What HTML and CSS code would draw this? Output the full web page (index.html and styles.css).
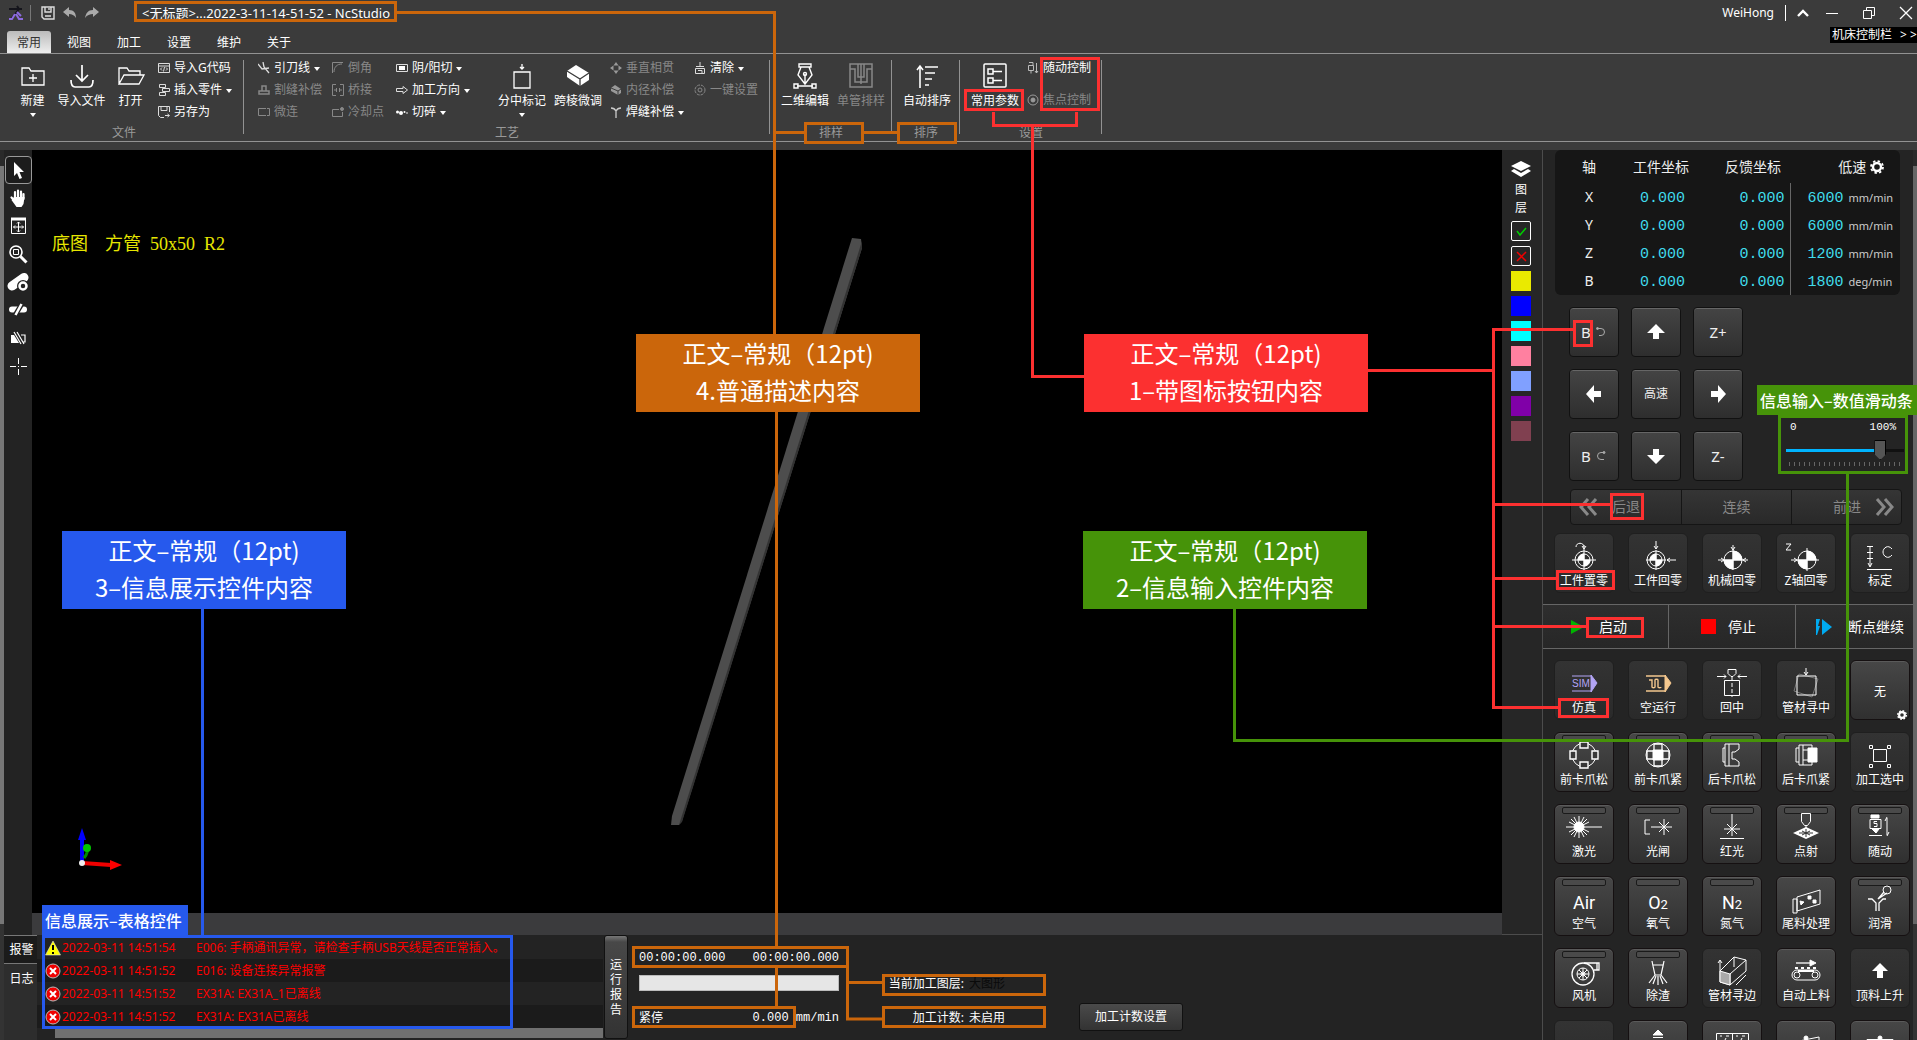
FILE: index.html
```html
<!DOCTYPE html>
<html lang="zh-CN">
<head>
<meta charset="utf-8">
<title>NcStudio</title>
<link rel="stylesheet" href="styles.css">
</head>
<body>
<div class="app">

<header class="titlebar">
  <svg class="logo" width="16" height="16" viewBox="0 0 16 16"><path d="M1 4h13M9 1l2 3-8 10" stroke="#15151c" stroke-width="2" fill="none"/><path d="M1 14h3l3-5M8 9l3 5h4M9 7l4 4" stroke="#8d6be0" stroke-width="2" fill="none"/></svg>
  <span class="bar"></span>
  <button class="plain" aria-label="保存"><svg width="16" height="16" viewBox="0 0 16 16" fill="none" stroke="#ddd" stroke-width="1.4"><path d="M2 2h12v12H4l-2-2zM5 2v5h6V2M5 11h6M9 3v2"/></svg></button>
  <button class="plain" aria-label="撤销"><svg width="16" height="16" viewBox="0 0 16 16"><path d="M1 7l6-5v3c5 0 7 3 7 8-2-3-4-4-7-4v3z" fill="#aaa"/></svg></button>
  <button class="plain" aria-label="重做"><svg width="16" height="16" viewBox="0 0 16 16"><path d="M15 7L9 2v3c-5 0-7 3-8 8 2-3 5-4 8-4v3z" fill="#aaa"/></svg></button>
  <h1>&lt;无标题&gt;...2022-3-11-14-51-52 - NcStudio</h1>
  <span class="user">WeiHong</span>
  <span class="bar light"></span>
  <button class="plain win" aria-label="收起"><svg width="14" height="14" viewBox="0 0 14 14"><path d="M2 10l5-5 5 5" stroke="#fff" stroke-width="2.4" fill="none"/></svg></button>
  <button class="plain win near" aria-label="最小化"><svg width="14" height="14" viewBox="0 0 14 14"><path d="M1 7.500h12" stroke="#fff"/></svg></button>
  <button class="plain win" aria-label="还原"><svg width="14" height="14" viewBox="0 0 14 14"><path d="M1.500 4.500h8v8h-8zM4.500 4V1.500h8v8H10" stroke="#fff" fill="none"/></svg></button>
  <button class="plain win" aria-label="关闭"><svg width="14" height="14" viewBox="0 0 14 14"><path d="M1 1l12 12M13 1L1 13" stroke="#fff" stroke-width="1.300"/></svg></button>
</header>

<nav class="tabs">
  <a class="on" href="#">常用</a><a href="#">视图</a><a href="#">加工</a><a href="#">设置</a><a href="#">维护</a><a href="#">关于</a>
  <button class="dock">机床控制栏 <span>&gt;</span><span>&gt;</span></button>
</nav>

<section class="ribbon">
  <div class="group file">
    <div class="items">
      <button class="big"><svg width="32" height="28" viewBox="0 0 32 28" fill="none" stroke="#fff" stroke-width="1.300"><path d="M5 23V6h7l2 3h13v14zM16 12v8M12 16h8"/></svg>新建<i></i></button>
      <button class="big"><svg width="32" height="28" viewBox="0 0 32 28" fill="none" stroke="#fff" stroke-width="1.700"><path d="M16 3v16M10 13l6 6 6-6M5 18c0 5 1 7 4 7h14c3 0 4-2 4-7"/></svg>导入文件</button>
      <button class="big"><svg width="32" height="28" viewBox="0 0 32 28" fill="none" stroke="#fff" stroke-width="1.300"><path d="M4 22V6h8l2 3h11v4M4 22l5-9h20l-5 9z"/></svg>打开</button>
      <div class="smalls">
        <button><svg width="12" height="12" viewBox="0 0 12 12" fill="none" stroke="#ddd"><path d="M.5 1.500h11v9H.5zM.5 4h11M4 5.500L2.500 7 4 8.500M8 5.500L9.500 7 8 8.500M6.500 5l-1 4.500"/></svg>导入G代码</button>
        <button><svg width="12" height="12" viewBox="0 0 12 12" fill="none" stroke="#ddd"><path d="M1.500.5h6v3h-6zM4.500 4.500h7v3h-7zM1.500 8.500h6v3h-6z"/></svg>插入零件<i></i></button>
        <button><svg width="12" height="12" viewBox="0 0 12 12" fill="none" stroke="#ddd"><path d="M11.500 6V.5H.5v9l2 2H6M3 .5v4h6v-4M7 9.500h4M9.500 8l2 1.500-2 1.500"/></svg>另存为</button>
      </div>
    </div>
    <h2>文件</h2>
  </div>
  <div class="group craft">
    <div class="items">
      <div class="smalls lead">
        <button><svg width="12" height="12" viewBox="0 0 12 12" fill="none" stroke="#ddd" stroke-width="1.300"><path d="M5 0l1 5 5 6M0 2l4 5 7-1"/></svg>引刀线<i></i></button>
        <button disabled><svg width="12" height="12" viewBox="0 0 12 12" fill="none" stroke="#888"><path d="M4 7V2h4v5M1 7h10v3H1z" stroke-width="1.500"/></svg>割缝补偿</button>
        <button disabled><svg width="12" height="12" viewBox="0 0 12 12" fill="none" stroke="#888"><path d="M8 2.500H.5v7H8M9 2.500h2.500v7H9"/></svg>微连</button>
      </div>
      <div class="smalls corner">
        <button disabled><svg width="12" height="12" viewBox="0 0 12 12" fill="none" stroke="#888"><path d="M.5 11V.5H11M2 10c0-5 3-8 8-8"/></svg>倒角</button>
        <button disabled><svg width="12" height="12" viewBox="0 0 12 12" fill="none" stroke="#888"><path d="M4 .5H.5v11H4M8 .5h3.500v11H8M2 6h3M7 6h3M4.500 4v4M7.500 4v4"/></svg>桥接</button>
        <button disabled><svg width="12" height="12" viewBox="0 0 12 12" fill="none" stroke="#888"><path d="M7 3.500H.5v7h10V6"/><circle cx="10" cy="3" r="1.500" fill="#888"/></svg>冷却点</button>
      </div>
      <div class="smalls cut">
        <button><svg width="12" height="12" viewBox="0 0 12 12"><path d="M.5 2.500h11v7H.5z" stroke="#ddd" fill="none"/><path d="M3 4h6v4H3z" fill="#fff"/></svg>阴/阳切<i></i></button>
        <button><svg width="12" height="12" viewBox="0 0 12 12" fill="none" stroke="#ddd"><path d="M.5 4.500H7v-2L11.500 6 7 9.500v-2H.5z"/></svg>加工方向<i></i></button>
        <button><svg width="12" height="12" viewBox="0 0 12 12" fill="#fff"><circle cx="1.500" cy="6" r="1.500"/><circle cx="5" cy="7" r="2"/><circle cx="8.500" cy="6" r="1"/><circle cx="11" cy="7" r=".8"/></svg>切碎<i></i></button>
      </div>
      <button class="big"><svg width="32" height="28" viewBox="0 0 32 28" fill="none" stroke="#fff" stroke-width="1.300"><path d="M8 10h16v16H8zM16 2v5M14 5l2 2 2-2"/></svg>分中标记<i></i></button>
      <button class="big"><svg width="32" height="28" viewBox="0 0 32 28"><path d="M5 9l9-6 13 8v7l-9 6L5 15z" fill="#fff"/><path d="M5 9l13 8 9-6M18 17v7" stroke="#3b3b3b" fill="none" stroke-width="1.300"/></svg>跨棱微调</button>
      <div class="smalls weld">
        <button disabled><svg width="12" height="12" viewBox="0 0 12 12" fill="#999"><path d="M6 0l2.500 3.500h-5zM6 12l2.500-3.500h-5zM0 6l3.500-2.500v5zM12 6L8.500 3.500v5z"/></svg>垂直相贯</button>
        <button disabled><svg width="12" height="12" viewBox="0 0 12 12"><path d="M1 4l4-3 6 4v4L8 11 1 7z" fill="#999"/><path d="M1 4l7 3v4M8 7l3-2" stroke="#3b3b3b" fill="none"/></svg>内径补偿</button>
        <button><svg width="12" height="12" viewBox="0 0 12 12" fill="none" stroke="#ccc" stroke-width="1.300"><path d="M1 2c3 0 4 1 5 3 1-2 2-3 5-3M6 4v8"/></svg>焊缝补偿<i></i></button>
      </div>
      <div class="smalls">
        <button><svg width="12" height="12" viewBox="0 0 12 12" fill="none" stroke="#ddd"><path d="M6 0v4M2 4.500h8M1.500 11.500v-5h9v5zM4 8.500h4v3"/></svg>清除<i></i></button>
        <button disabled><svg width="12" height="12" viewBox="0 0 12 12" fill="none" stroke="#888"><circle cx="6" cy="6" r="5" stroke-dasharray="3 1"/><circle cx="6" cy="6" r="2"/></svg>一键设置</button>
      </div>
    </div>
    <h2>工艺</h2>
  </div>
  <div class="group nest">
    <div class="items">
      <button class="big"><svg width="32" height="28" viewBox="0 0 32 28" fill="none" stroke="#fff" stroke-width="1.400"><path d="M10 2h12v3H10zM12 5l-3 8 7 9 7-9-3-8M16 12v10M8 24h16M5 22h4v4H5zM23 22h4v4h-4z"/><circle cx="16" cy="12" r="1.500"/></svg>二维编辑</button>
      <button class="big" disabled><svg width="32" height="28" viewBox="0 0 32 28" fill="none" stroke="#888" stroke-width="1.500"><path d="M5 2h22v23H5zM5 7h5v13h12V7h5M13 2v13h6V2M16 2v20"/></svg>单管排样</button>
    </div>
    <h2>排样</h2>
  </div>
  <div class="group order">
    <div class="items">
      <button class="big"><svg width="32" height="28" viewBox="0 0 32 28" fill="none" stroke="#fff" stroke-width="1.600"><path d="M9 26V4M6 8l3-4 3 4M14 5h13M14 11h10M14 17h7M14 23h4"/></svg>自动排序</button>
    </div>
    <h2>排序</h2>
  </div>
  <div class="group setup">
    <div class="items">
      <button class="big"><svg width="32" height="28" viewBox="0 0 32 28" fill="none" stroke="#fff" stroke-width="1.500"><rect x="5" y="2" width="22" height="23" rx="1"/><path d="M9 7h5v5H9zM9 16h5v5H9zM14 9.500h9M14 18.500h9"/></svg>常用参数</button>
      <div class="smalls wide">
        <button><svg width="12" height="12" viewBox="0 0 12 12" fill="none" stroke="#bbb"><path d="M2 .5h4v3M1.500 3.500h5v5h-5zM4 9v2.500M9.500 1v10M8 9l1.500 2L11 9"/></svg>随动控制</button>
        <button disabled><svg width="12" height="12" viewBox="0 0 12 12" fill="none" stroke="#999"><circle cx="6" cy="6" r="5"/><circle cx="6" cy="6" r="2" fill="#999"/></svg>焦点控制</button>
      </div>
    </div>
    <h2>设置</h2>
  </div>
</section>

<main class="work">
  <div class="edge"></div>
  <div class="left">
    <div class="stage">
      <div class="toolbar">
        <button class="on" aria-label="选择"><svg width="24" height="24" viewBox="0 0 24 24"><path d="M8 4v14l3-3 2.500 6 2.500-1-2.500-6H18z" fill="#fff"/></svg></button>
        <button aria-label="平移"><svg width="24" height="24" viewBox="0 0 24 24"><path d="M9 12V6M12 11V4.500M15 12V5.500M17.500 13V8M9 15l-3.500-3.500" stroke="#fff" stroke-width="2.200" stroke-linecap="round"/><path d="M8 11h10.500l-1 7-2 3h-5l-5-7z" fill="#fff"/></svg></button>
        <button aria-label="全部显示"><svg width="24" height="24" viewBox="0 0 24 24" fill="none" stroke="#fff"><path d="M5.500 5.500h14v14h-14z"/><path d="M5 5h15" stroke-width="3"/><path d="M12.500 8v10M7.500 13h10M11 9.500L12.500 8 14 9.500M11 16.500l1.500 1.500 1.500-1.500M9 11.500L7.500 13 9 14.500M16 11.500l1.500 1.500-1.500 1.500"/></svg></button>
        <button aria-label="窗口放大"><svg width="24" height="24" viewBox="0 0 24 24" fill="none" stroke="#fff"><circle cx="10" cy="10" r="6" stroke-width="1.600"/><path d="M7.500 7.500h5v5h-5z"/><path d="M14.500 14.500l6 6" stroke-width="3"/></svg></button>
        <button aria-label="管材设置"><svg width="24" height="24" viewBox="0 0 24 24"><path d="M6 16L18 7.500" stroke="#fff" stroke-width="9" stroke-linecap="round"/><circle cx="17" cy="16" r="6" fill="#232323"/><circle cx="17" cy="16" r="3.500" fill="none" stroke="#fff" stroke-width="2.500"/></svg></button>
        <button aria-label="打断"><svg width="24" height="24" viewBox="0 0 24 24"><path d="M6 11.500h12" stroke="#fff" stroke-width="6" stroke-linecap="round"/><path d="M8 19l9-15" stroke="#232323" stroke-width="5"/><path d="M9.500 17l6-11" stroke="#fff" stroke-width="2.500"/></svg></button>
        <button aria-label="镜像"><svg width="24" height="24" viewBox="0 0 24 24"><path d="M5 9h3l5 8H5z" fill="#fff"/><path d="M8 6l7 12M11 6l7 12M15 9h4v7h-2" stroke="#fff" stroke-width="1.200" fill="none"/></svg></button>
        <button aria-label="定位"><svg width="24" height="24" viewBox="0 0 24 24" stroke="#fff"><path d="M12.500 4v6M12.500 15v6M4 12.500h6M15 12.500h6M12 12.500h1"/></svg></button>
      </div>
      <div class="canvas">
        <p class="caption"><span class="base">底图</span><span>方管</span><span>50x50</span><span>R2</span></p>
        <svg class="scene" width="1470" height="763" viewBox="32 150 1470 763">
          <path d="M852 238l9 1 1 9-180 573-3 4h-8l1-9z" fill="#4d4d4d"/><path d="M862 241v7L682 822l-3 3z" fill="#333"/>
          <path d="M82 862V838" stroke="#00f" stroke-width="4"/><path d="M78 840l4-12 4 12z" fill="#00f"/>
          <path d="M84 858q5-6 3-12" stroke="#008a00" stroke-width="3" fill="none"/><circle cx="87" cy="848" r="4" fill="#00c400"/>
          <path d="M82 863l29 2" stroke="#e00" stroke-width="4"/><path d="M110 860l12 5-12 5z" fill="#f00"/><circle cx="82" cy="863" r="3" fill="#eee"/>
        </svg>
      </div>
      <div class="layers">
        <svg width="20" height="18" viewBox="0 0 20 18"><path d="M10 1l10 5-10 5L0 6z" fill="#fff"/><path d="M0 11l3-2 7 4 7-4 3 2-10 6z" fill="#fff"/></svg>
        <span>图</span><span>层</span>
        <button class="box" aria-label="全选"><svg width="18" height="18" viewBox="0 0 18 18"><path d="M5 9l3 4 6-7" stroke="#0c0" stroke-width="1.500" fill="none"/></svg></button>
        <button class="box" aria-label="全不选"><svg width="18" height="18" viewBox="0 0 18 18"><path d="M5 5l9 9M14 5l-9 9" stroke="#e00" stroke-width="1.500"/></svg></button>
        <button class="yellow" aria-label="图层1"></button><button class="blue" aria-label="图层2"></button><button class="cyan" aria-label="图层3"></button><button class="pink" aria-label="图层4"></button><button class="sky" aria-label="图层5"></button><button class="purple" aria-label="图层6"></button><button class="wine" aria-label="图层7"></button>
      </div>
    </div>
    <div class="bottom">
      <div class="logtabs"><button class="on">报警</button><button>日志</button></div>
      <div class="alarms">
        <table>
          <tr><td><svg width="16" height="16" viewBox="0 0 16 16"><path d="M8 1l7.500 14H.5z" fill="#ff0" stroke="#ddd" stroke-width=".6"/><path d="M8 5v5M8 12v2" stroke="#000" stroke-width="2"/></svg></td><td>2022-03-11 14:51:54</td><td>E006: 手柄通讯异常，请检查手柄USB天线是否正常插入。</td></tr>
          <tr><td><svg width="16" height="16" viewBox="0 0 16 16"><circle cx="8" cy="8" r="7" fill="#e00" stroke="#bbb"/><path d="M5 5l6 6M11 5l-6 6" stroke="#fff" stroke-width="2"/></svg></td><td>2022-03-11 14:51:52</td><td>E016: 设备连接异常报警</td></tr>
          <tr><td><svg width="16" height="16" viewBox="0 0 16 16"><circle cx="8" cy="8" r="7" fill="#e00" stroke="#bbb"/><path d="M5 5l6 6M11 5l-6 6" stroke="#fff" stroke-width="2"/></svg></td><td>2022-03-11 14:51:52</td><td>EX31A: EX31A_1已离线</td></tr>
          <tr><td><svg width="16" height="16" viewBox="0 0 16 16"><circle cx="8" cy="8" r="7" fill="#e00" stroke="#bbb"/><path d="M5 5l6 6M11 5l-6 6" stroke="#fff" stroke-width="2"/></svg></td><td>2022-03-11 14:51:52</td><td>EX31A: EX31A已离线</td></tr>
        </table>
        <div class="hscroll"></div>
      </div>
      <button class="report">运行报告</button>
      <div class="status">
        <div class="pair mono"><span>00:00:00.000</span><span>00:00:00.000</span></div>
        <div class="progress"></div>
        <div class="pair"><span>紧停</span><span class="mono">0.000 mm/min</span></div>
      </div>
      <dl class="counts">
        <dt>当前加工图层:</dt><dd class="dim">大图形</dd>
        <dt>加工计数:</dt><dd>未启用</dd>
      </dl>
      <button class="countset">加工计数设置</button>
    </div>
  </div>

  <aside class="panel">
    <table class="coords">
      <thead><tr><th>轴</th><th>工件坐标</th><th>反馈坐标</th><th>低速 <svg width="14" height="14" viewBox="0 0 14 14" fill="none" stroke="#fff"><circle cx="7" cy="7" r="4" stroke-width="2.400"/><circle cx="7" cy="7" r="6" stroke-width="1.800" stroke-dasharray="2.400 2.300"/></svg></th></tr></thead>
      <tbody>
        <tr><td>X</td><td>0.000</td><td>0.000</td><td>6000<small>mm/min</small></td></tr>
        <tr><td>Y</td><td>0.000</td><td>0.000</td><td>6000<small>mm/min</small></td></tr>
        <tr><td>Z</td><td>0.000</td><td>0.000</td><td>1200<small>mm/min</small></td></tr>
        <tr><td>B</td><td>0.000</td><td>0.000</td><td>1800<small>deg/min</small></td></tr>
      </tbody>
    </table>
    <div class="jog">
      <div class="pad">
        <button>B <svg width="12" height="12" viewBox="0 0 12 12" fill="none" stroke="#aaa"><path d="M3 2.500h3a3.500 3.500 0 010 7H4"/><circle cx="2.500" cy="2.500" r="1" fill="#aaa"/></svg></button>
        <button aria-label="上"><svg width="18" height="18" viewBox="0 0 18 18"><path d="M9 1l9 9h-6v6H6v-6H0z" fill="#fff"/></svg></button>
        <button>Z+</button>
        <button aria-label="左"><svg width="18" height="18" viewBox="0 0 18 18"><path d="M1 9l8-9v6h7v6H9v6z" fill="#fff"/></svg></button>
        <button class="cn">高速</button>
        <button aria-label="右"><svg width="18" height="18" viewBox="0 0 18 18"><path d="M17 9L9 0v6H2v6h7v6z" fill="#fff"/></svg></button>
        <button>B <svg width="12" height="12" viewBox="0 0 12 12" fill="none" stroke="#aaa"><path d="M9 2.500H6a3.500 3.500 0 000 7h3"/><circle cx="9" cy="2.500" r="1" fill="#aaa"/></svg></button>
        <button aria-label="下"><svg width="18" height="18" viewBox="0 0 18 18"><path d="M9 17L0 8h6V2h6v6h6z" fill="#fff"/></svg></button>
        <button>Z-</button>
      </div>
      <label class="feed"><span class="scale"><span>0</span><span>100%</span></span><input type="range" min="0" max="120" value="100"><span class="ticks"></span></label>
    </div>
    <div class="step">
      <button><svg width="20" height="18" viewBox="0 0 20 18" fill="none" stroke="#888" stroke-width="3"><path d="M10 1L3 9l7 8M18 1l-7 8 7 8"/></svg>后退</button>
      <button>连续</button>
      <button>前进<svg width="20" height="18" viewBox="0 0 20 18" fill="none" stroke="#888" stroke-width="3"><path d="M2 1l7 8-7 8M10 1l7 8-7 8"/></svg></button>
    </div>
    <div class="keys home">
      <button class="flat"><svg width="40" height="30" viewBox="0 0 40 30" fill="none" stroke="#fff"><circle cx="20" cy="19" r="9"/><circle cx="20" cy="19" r="6"/><path d="M8 19h24M20 4v26M12 6c0-5 8-5 8 0M18 5l2 3 2-3"/><path d="M20 19v-6a6 6 0 00-6 6zM20 19v6a6 6 0 006-6z" fill="#fff"/></svg>工件置零</button>
      <button class="flat"><svg width="40" height="30" viewBox="0 0 40 30" fill="none" stroke="#fff"><circle cx="18" cy="19" r="9"/><circle cx="18" cy="19" r="6"/><path d="M8 19h20M18 9v20M18 0v8M16 5l2 3 2-3M38 19h-9M32 17l-3 2 3 2"/><path d="M18 19v-6a6 6 0 00-6 6zM18 19v6a6 6 0 006-6z" fill="#fff"/></svg>工件回零</button>
      <button class="flat"><svg width="40" height="30" viewBox="0 0 40 30" fill="none" stroke="#fff"><circle cx="21" cy="19" r="9"/><path d="M6 19h30M21 4v25M9 17l3 2-3 2M34 17l-3 2 3 2M19 6l2 3 2-3"/><path d="M21 19h9a9 9 0 00-9-9zM21 19h-9a9 9 0 009 9z" fill="#fff"/></svg>机械回零</button>
      <button class="flat"><svg width="40" height="30" viewBox="0 0 40 30" fill="none" stroke="#fff"><circle cx="21" cy="19" r="9"/><path d="M5 19h28M21 7v23M8 17l3 2-3 2M0 3h5l-5 6h5"/><path d="M21 19h9a9 9 0 00-9-9zM21 19h-9a9 9 0 009 9z" fill="#fff"/></svg>Z轴回零</button>
      <button class="flat"><svg width="40" height="30" viewBox="0 0 40 30" fill="none" stroke="#fff"><path d="M10 5v20M7 5.500h6M7 11.500h6M7 17.500h6M8 22l2 4 2-4M7 28.500h25M32 8c-4-5-9-1-9 3s5 8 9 3"/></svg>标定</button>
    </div>
    <div class="run">
      <button><svg width="14" height="14" viewBox="0 0 14 14"><path d="M0 0l13 7-13 7z" fill="#00b400"/></svg>启动</button>
      <button><svg width="15" height="15" viewBox="0 0 15 15"><path d="M0 0h15v15H0z" fill="#f00"/></svg>停止</button>
      <button><svg width="16" height="16" viewBox="0 0 16 16"><path d="M0 0h4L2 7h2l-3 9H0zM6 0l10 8-10 8z" fill="#00aaf0"/></svg>断点继续</button>
    </div>
    <div class="keys">
      <button class="flat"><svg width="40" height="30" viewBox="0 0 40 30" fill="none" stroke="#b3a5f5"><path d="M8 8h20M8 23h20"/><path d="M27 7l6 8-6 9z" fill="#b3a5f5"/><text x="8" y="19" class="sim">SIM</text></svg>仿真</button>
      <button class="flat"><svg width="40" height="30" viewBox="0 0 40 30" fill="none" stroke="#f4c78e"><path d="M8 8h20M8 23h20M11 12h3v7c0 1 3 1 3 0v-7c0-1 3-1 3 0v7c0 1 3 1 3 0" stroke-width="1.400"/><path d="M27 7l6 8-6 9z" fill="#f4c78e"/></svg>空运行</button>
      <button class="flat"><svg width="40" height="30" viewBox="0 0 40 30" fill="none" stroke="#fff"><path d="M12.500 12.500h15v15h-15zM16 1.500h8v4l-3 3h-2l-3-3zM5 8.500h9M12 6.500l2 2-2 2M35 8.500h-9M28 6.500l-2 2 2 2"/><path d="M20 9v20" stroke-dasharray="4 2"/></svg>回中</button>
      <button class="flat"><svg width="40" height="30" viewBox="0 0 40 30" fill="none" stroke="#777"><path d="M13 6l19 5-6 18-18-6z"/><path d="M11 8h19v19H11zM20 0v7M18 4l2 3 2-3" stroke="#fff"/></svg>管材寻中</button>
      <button class="none">无<svg width="10" height="10" viewBox="0 0 14 14" fill="none" stroke="#fff"><circle cx="7" cy="7" r="4" stroke-width="3"/><circle cx="7" cy="7" r="6" stroke-width="2" stroke-dasharray="2.400 2.300"/></svg></button>

      <button class="led"><svg width="40" height="30" viewBox="0 0 40 30" fill="none" stroke="#fff"><circle cx="20" cy="15" r="12"/><g fill="#383838" stroke-width="1.400"><path d="M16 2h8v6h-8zM16 22h8v6h-8zM6 11h6v8H6zM28 11h6v8h-6z"/></g></svg>前卡爪松</button>
      <button class="led"><svg width="40" height="30" viewBox="0 0 40 30" fill="none" stroke="#fff"><circle cx="20" cy="15" r="12"/><g stroke-width="1.300"><path d="M16 4h8v7h-8zM16 19h8v7h-8zM9 11h7v8H9zM24 11h7v8h-7z"/></g><path d="M15 10h10v10H15z" fill="#fff"/></svg>前卡爪紧</button>
      <button class="led"><svg width="40" height="30" viewBox="0 0 40 30" fill="none" stroke="#fff"><path d="M17 4h-4v22h4zM13 8h-2v14h2M17 4h10v5l-4 3h-3v7h3l4 3v4H17"/></svg>后卡爪松</button>
      <button class="led"><svg width="40" height="30" viewBox="0 0 40 30" fill="none" stroke="#fff"><path d="M17 5h-4v20h4zM13 8h-3v14h3M17 5h9v20h-9M17 10h6v10h-6"/><path d="M22 8h9v14h-9z" fill="#fff"/></svg>后卡爪紧</button>
      <button class="flat"><svg width="40" height="30" viewBox="0 0 40 30" fill="none" stroke="#fff"><path d="M13.500 9.500h13v12h-13zM9.500 5.500h3v3h-3zM27.500 5.500h3v3h-3zM9.500 24.500h3v3h-3zM27.500 24.500h3v3h-3z"/></svg>加工选中</button>

      <button class="led"><svg width="40" height="30" viewBox="0 0 40 30" stroke="#fff"><circle cx="15" cy="15" r="5" fill="#fff"/><path d="M2 15h36M15 4v22M7 7l16 16M23 7L7 23M10 5l10 20M20 5L10 25M5 10l20 10M25 10L5 20"/></svg>激光</button>
      <button class="led"><svg width="40" height="30" viewBox="0 0 40 30" fill="none" stroke="#fff"><path d="M12 8H7v14h5M13 15h21M26 7v16M21 10l10 10M31 10L21 20"/></svg>光闸</button>
      <button class="led"><svg width="40" height="30" viewBox="0 0 40 30" stroke="#fff"><path d="M20 2v22M12 17h16M15 12l10 10M25 12L15 22M8 26.500h24"/></svg>红光</button>
      <button class="led"><svg width="40" height="30" viewBox="0 0 40 30" fill="none" stroke="#fff"><path d="M15.500 1.500h9v8l-3 4h-3l-3-4zM20 14v5"/><path d="M7 21l13-6 13 6-13 6z" fill="#fff" stroke="none"/><path d="M13 21h14M20 17v8M16 19l8 4M24 19l-8 4" stroke="#333"/></svg>点射</button>
      <button class="led"><svg width="40" height="30" viewBox="0 0 40 30" fill="none" stroke="#fff"><path d="M11 3h8v3h-8zM12 17h7l-3 4z" fill="#fff"/><path d="M10 7.500h11v9H10zM17 9.500h-3v2h3v3h-3M9 23.500h13M27 6v17M25 9l2-4M29 20l-2 4"/></svg>随动</button>

      <button class="led"><span class="gas">Air</span>空气</button>
      <button class="led"><span class="gas">O<b>2</b></span>氧气</button>
      <button class="led"><span class="gas">N<b>2</b></span>氮气</button>
      <button class="unled"><svg width="40" height="30" viewBox="0 0 40 30" fill="none" stroke="#fff"><path d="M7 15h4v14H7zM11 13l23-7v14l-23 7z"/><path d="M14 17l4 1-3 3zM22 12h3v3h-3zM27 16h3v3h-3z" fill="#fff"/></svg>尾料处理</button>
      <button class="led"><svg width="40" height="30" viewBox="0 0 40 30" fill="none" stroke="#fff"><circle cx="27" cy="6" r="4"/><path d="M24 8l-6 7 9-6M8 15h4l4 4v8M26 15h-3l-4 4v8" stroke-width="1.300"/></svg>润滑</button>

      <button class="led"><svg width="40" height="30" viewBox="0 0 40 30" fill="none" stroke="#fff"><path d="M20 7h15v7h-5M33 7v7" stroke-width="1.300"/><circle cx="19" cy="18" r="11" stroke-width="1.300"/><circle cx="19" cy="18" r="6"/><circle cx="19" cy="18" r="2"/><path d="M13 18h12M19 12v12M15 14l8 8M23 14l-8 8"/></svg>风机</button>
      <button class="led"><svg width="40" height="30" viewBox="0 0 40 30" fill="none" stroke="#fff"><path d="M14 5l1 5 2 9h6l2-9 1-5M15 9h10M17 19l-6 8M18 20l-3 8M20 20v9M22 20l3 8M23 19l6 8" stroke-width="1.200"/></svg>除渣</button>
      <button class="flat"><svg width="40" height="30" viewBox="0 0 40 30" fill="none" stroke="#fff"><path d="M8 15l14-14 12 3v11L18 29 8 26zM18 18L34 4M18 18v11M22 1v10M8 5v10M6 7l2-3 2 3M34 19l-8 8M24 29l5-5"/><path d="M8 15l10 3v11L8 26z" fill="#aaa"/></svg>管材寻边</button>
      <button class="unled"><svg width="40" height="30" viewBox="0 0 40 30" fill="none" stroke="#fff"><path d="M10 7h14" stroke-width="1.300"/><path d="M24 4l6 3-6 3z" fill="#fff"/><rect x="6" y="14" width="28" height="10" rx="5"/><circle cx="11" cy="19" r="3"/><circle cx="29" cy="19" r="3"/><path d="M9 12h3M15 12h3M21 12h3M27 12h3M12 15h16" stroke-width="2"/></svg>自动上料</button>
      <button class="flat"><svg width="40" height="30" viewBox="0 0 40 30"><path d="M20 7l8 8h-5v7h-6v-7h-5z" fill="#fff"/></svg>顶料上升</button>

      <button class="flat" aria-label="顶料下降"><svg width="40" height="30" viewBox="0 0 40 30"><path d="M17 12h6v5h5l-8 8-8-8h5z" fill="#fff"/></svg></button>
      <button class="unled" aria-label="夹紧"><svg width="40" height="30" viewBox="0 0 40 30" fill="none" stroke="#fff"><path d="M15 7l5-5 5 5z" fill="#fff"/><path d="M15 9.500h10M4 12.500h32v12H4zM20 12v12"/></svg></button>
      <button class="unled" aria-label="松开"><svg width="40" height="30" viewBox="0 0 40 30" fill="none" stroke="#fff"><path d="M4.500 5.500h32v20h-32zM20.500 5v20M8 8h2M14 8h3M24 8h2M30 8h3M12 14l2-4M28 14l2-4"/></svg></button>
      <button class="unled" aria-label="翻转"><svg width="40" height="30" viewBox="0 0 40 30" fill="none" stroke="#fff"><path d="M8 14l25-5v14L8 28z"/><circle cx="20" cy="10" r="2" fill="#fff"/></svg></button>
      <button class="unled" aria-label="复位"><svg width="40" height="30" viewBox="0 0 40 30" fill="none" stroke="#fff"><path d="M7 11.500h26v14H7z"/><circle cx="20" cy="10" r="2" fill="#fff"/></svg></button>
    </div>
  </aside>
  <div class="vscroll"></div>
</main>

<div class="notes">
  <svg width="1917" height="1040" viewBox="0 0 1917 1040" fill="none" stroke-width="3">
    <g stroke="#cb660b">
      <path d="M135.500 2.500h260v18h-260zM397 12.500h377.500V334M776.500 412v534M776.500 968v38M775 132.500h29M864 132.500h34M805.500 123.500h57v19h-57zM898.500 123.500h57v19h-57z"/>
      <path d="M633.500 947.500h214v19h-214zM633.500 1007.500h161v19h-161zM847.500 968v51H882M849 982.500h33M883.500 975.500h161v19h-161zM883.500 1007.500h161v19h-161z"/>
    </g>
    <g stroke="#fc3030">
      <path d="M965.500 90.500h57v19h-57zM1041.500 58.500h57v51h-57zM993.500 112v13.500h83V112M1032.500 127v249.500H1084"/>
      <path d="M1367 370.500h127M1573 329.500h-79.500v378H1558M1494 504.500h116M1494 578.500h62M1494 626.500h92M1574.500 321.500h17v24h-17zM1611.500 494.500h31v24h-31zM1557.500 571.500h56v17h-56zM1587.500 618.500h55v18h-55zM1559.500 699.500h48v17h-48z"/>
    </g>
    <path stroke="#469309" d="M1779.500 416.500h127v56h-127zM1847.500 474v266.500h-613V609"/>
    <path stroke="#2659ed" d="M43.500 936.500h468v91h-468zM202.500 609v326"/>
  </svg>
  <p class="note orange">正文–常规（12pt)<br>4.普通描述内容</p>
  <p class="note red">正文–常规（12pt)<br>1–带图标按钮内容</p>
  <p class="note green">正文–常规（12pt)<br>2–信息输入控件内容</p>
  <p class="note azure">正文–常规（12pt)<br>3–信息展示控件内容</p>
  <p class="tag table">信息展示–表格控件</p>
  <p class="tag slider">信息输入–数值滑动条</p>
</div>
</div>
</body>
</html>
```
FILE: styles.css
```css
* { box-sizing: border-box; }
body { margin: 0; background: #3b3b3b; color: #fff; font: 12px/18px "Noto Sans", "Noto Sans CJK SC", sans-serif; }
h1, h2, p, dl, dd { margin: 0; font-size: 12px; font-weight: 400; }
button { margin: 0; padding: 0; border: 0; background: none; color: inherit; font: inherit; }
svg { display: block; flex: none; }
.mono { font-family: "Liberation Mono", "Noto Sans CJK SC", monospace; }
.app { position: relative; display: flex; flex-direction: column; height: 100vh; overflow: hidden; }

/* title bar */
.titlebar { display: flex; align-items: center; height: 26px; padding: 0 4px 0 8px; flex: none; }
.titlebar .bar { width: 1px; height: 16px; margin: 0 9px 0 6px; background: #777; }
.titlebar .plain { margin-right: 6px; }
.titlebar h1 { margin-left: 36px; font-size: 13px; }
.titlebar .user { margin-left: auto; }
.titlebar .bar.light { background: #fff; margin: 0 10px 0 11px; }
.titlebar .win { margin: 0 0 0 23px; }
.titlebar .bar + .win { margin-left: 0; }
.titlebar .near { margin-left: 15px; }

.tabs { display: flex; align-items: flex-end; height: 28px; padding-left: 7px; border-bottom: 1px solid #929292; flex: none; }
.tabs a { width: 44px; height: 22px; margin-right: 6px; line-height: 24px; text-align: center; color: #fff; text-decoration: none; }
.tabs a.on { background: linear-gradient(#bbb, #eee); color: #333; border-radius: 3px 3px 0 0; }
.dock { display: flex; gap: 3px; align-self: flex-start; width: 87px; height: 16px; margin: 1px 0 0 auto; background: #000; line-height: 16px; padding-left: 2px; white-space: nowrap; }
.dock span:first-of-type { margin-left: 5px; }

/* ribbon */
.ribbon { display: flex; height: 88px; padding-left: 4px; border-bottom: 1px solid #929292; flex: none; }
.group { display: flex; flex-direction: column; background: linear-gradient(#929292, #929292) no-repeat right 6px / 1px 74px; }
.group h2 { color: #999; text-align: center; line-height: 17px; }
.file { width: 240px; }
.craft { width: 526px; }
.nest { width: 122px; }
.order { width: 68px; }
.setup { width: 142px; }
.items { display: flex; height: 70px; padding: 3px 0 0 7px; flex: none; }
.file .items { padding-left: 4px; }
.craft .items { padding-left: 14px; }
.big { display: flex; flex-direction: column; align-items: center; width: 56px; height: 66px; padding-top: 5px; white-space: nowrap; }
.file .big { width: 49px; }
.ribbon i { width: 0; height: 0; border: 3px solid transparent; border-top: 4px solid #fff; border-bottom: 0; margin: 1px 0 0; }
.big svg { margin-bottom: 2px; }
.big i { margin-top: 3px; }
.ribbon button:disabled { color: #888; }
.smalls { display: flex; flex-direction: column; }
.smalls button { display: flex; align-items: center; gap: 4px; height: 22px; white-space: nowrap; }
.smalls.wide { gap: 10px; margin-left: 4px; }
.file .smalls { margin-left: 3px; }
.lead { width: 74px; }
.corner { width: 64px; }
.cut { width: 98px; }
.weld { width: 84px; margin-left: 4px; }

/* work area */
.work { display: flex; flex: 1; min-height: 0; padding-top: 8px; }
.edge { width: 4px; background: linear-gradient(#2a2a2a 16px, #777 16px, #777 774px, #333 774px); flex: none; }
.left { display: flex; flex-direction: column; flex: 1; min-width: 0; }
.stage { display: flex; flex: 1; min-height: 0; background: #232323; }
.toolbar { display: flex; flex-direction: column; align-items: center; width: 28px; padding-top: 6px; flex: none; }
.toolbar button { display: flex; align-items: center; justify-content: center; width: 27px; height: 28px; }
.toolbar .on { border: 1px solid #999; border-radius: 4px; background: #1c1c1c; }
.canvas { position: relative; flex: 1; min-width: 0; overflow: hidden; background: #000; border-bottom: 22px solid #3b3b3d; }
.scene { position: absolute; left: 0; top: 0; }
.caption { display: flex; gap: 9px; padding: 82px 0 0 20px; color: #e6e600; font: 18px/24px "Liberation Serif", "Noto Sans CJK SC", serif; }
.caption .base { margin-right: 8px; }
.layers { display: flex; flex-direction: column; align-items: center; width: 41px; padding: 10px 2px 0 0; border-right: 1px solid #4c4c4c; border-bottom: 1px solid #4c4c4c; background: #262626; flex: none; }
.layers > svg { margin-bottom: 3px; }
.layers span + span { margin-bottom: 4px; }
.layers button { width: 20px; height: 20px; margin-bottom: 5px; flex: none; }
.layers .box { border: 1px solid #fff; border-radius: 2px; }
.yellow { background: #eaea00; }
.blue { background: #00f; }
.cyan { background: #0ff; }
.pink { background: #ff80a0; }
.sky { background: #80a0ff; }
.purple { background: #8000a8; }
.wine { background: #804050; }

/* bottom area */
.bottom { display: flex; height: 105px; background: #232323; border-right: 1px solid #4c4c4c; flex: none; }
.logtabs { display: flex; flex-direction: column; width: 33px; background: #2d2d2d; flex: none; }
.logtabs button { height: 29px; padding-left: 2px; }
.logtabs .on { background: #1b1b1b; border: solid #777; border-width: 1px 0; }
.alarms { width: 566px; padding-top: 1px; overflow: hidden; flex: none; }
.alarms table { width: 100%; border-collapse: collapse; color: #f00; background: #1b1b1b; }
.alarms tr:nth-child(odd) { background: #232323; }
.alarms td { height: 23px; padding: 0; white-space: nowrap; }
.alarms td:first-child { width: 25px; padding-left: 8px; }
.alarms td:nth-child(2) { width: 134px; }
.hscroll { height: 10px; margin-left: 18px; background: #707070; }
.report { width: 24px; height: 104px; margin-left: 1px; padding: 0 5px; border: 1px solid #111; border-radius: 3px; background: linear-gradient(#777, #484848 6px, #333); line-height: 15px; flex: none; }
.status { display: flex; flex-direction: column; width: 200px; margin-left: 11px; padding-top: 14px; flex: none; }
.pair { display: flex; justify-content: space-between; white-space: nowrap; }
.progress { height: 16px; margin: 8px 0 18px; background: #e6e6e6; border: 1px solid #bbb; }
.counts { display: grid; grid-template-columns: 76px auto; align-content: start; gap: 16px 5px; width: 120px; margin: 40px 0 0 49px; text-align: right; white-space: nowrap; flex: none; }
.counts dd { text-align: left; }
.counts .dim { color: #0a0a0a; }
.countset { width: 104px; height: 28px; margin: 68px 0 0 71px; border: 1px solid #111; border-radius: 3px; background: linear-gradient(#4a4a4a, #333); }

/* machine panel */
.panel { width: 370px; background: #242424; overflow: hidden; flex: none; }
.vscroll { width: 4px; background: linear-gradient(#2a2a2a 16px, #666 16px, #666 774px, #333 774px); flex: none; }
.coords { width: 345px; margin-left: 12px; table-layout: fixed; border-collapse: collapse; background: #161616; border-radius: 6px; }
.coords th, .coords td { padding: 0; font-size: 14px; font-weight: 400; height: 28px; text-align: center; color: #eee; white-space: nowrap; }
.coords th { height: 33px; }
.coords th:nth-child(1) { width: 68px; }
.coords th:nth-child(2) { width: 76px; }
.coords th:nth-child(3) { width: 91px; text-align: right; padding-right: 9px; }
.coords th:last-child { text-align: right; padding-right: 16px; }
.coords th svg { display: inline-block; vertical-align: -2px; }
.coords td + td { padding: 3px 14px 0 0; font: 15px/20px "Liberation Mono", monospace; color: #40dcec; text-align: right; }
.coords td:nth-child(3) { padding-right: 5px; border-right: 1px solid #666; }
.coords td:last-child { text-align: left; padding-left: 17px; padding-right: 0; }
.coords small { margin-left: 5px; font: 11px "Noto Sans", sans-serif; color: #ccc; }
.jog { display: flex; align-items: flex-end; padding: 12px 0 0 26px; }
.pad { display: grid; grid-template-columns: repeat(3, 50px); gap: 12px; }
.pad button { display: flex; align-items: center; justify-content: center; gap: 4px; height: 50px; border: 1px solid #111; border-radius: 4px; background: linear-gradient(#444, #2e2e2e); box-shadow: inset 0 1px #666; font-size: 15px; color: #eee; }
.pad .cn { font-size: 12px; }
.feed { display: block; width: 118px; margin: 0 0 15px 43px; font: 11px/14px "Liberation Mono", monospace; }
.scale { display: flex; justify-content: space-between; padding: 0 8px 0 4px; }
.feed input { display: block; appearance: none; width: 100%; height: 22px; margin: 5px 0 0; background: linear-gradient(90deg, #00b4ff 80%, #111 80%) no-repeat center / 100% 3px; }
.feed input::-webkit-slider-thumb { appearance: none; width: 12px; height: 20px; background: #555; border: 1px solid #000; clip-path: polygon(0 0, 100% 0, 100% 70%, 50% 100%, 0 70%); }
.ticks { display: block; height: 4px; margin: 1px 3px 0; background: repeating-linear-gradient(90deg, #666 0 1px, transparent 1px 5px); }
.step { display: flex; width: 332px; height: 36px; margin: 8px 0 0 27px; border: 1px solid #151515; border-radius: 4px; background: linear-gradient(#353535, #292929); }
.step button { display: flex; align-items: center; justify-content: center; width: 110px; color: #888; font-size: 14px; }
.step button + button { border-left: 1px solid #151515; }
.step button:first-child { justify-content: flex-start; padding-left: 7px; gap: 14px; }
.step button:last-child { justify-content: flex-end; padding-right: 6px; gap: 14px; }
.keys { display: grid; grid-template-columns: repeat(5, 60px); gap: 12px 14px; padding: 11px 0 0 11px; }
.keys.home { padding-top: 8px; }
.keys button { display: flex; flex-direction: column; align-items: center; height: 60px; padding-top: 2px; border: 1px solid #151011; border-radius: 6px; background: linear-gradient(#474747, #303030); box-shadow: inset 0 1px #5a5a5a; white-space: nowrap; line-height: 16px; }
.keys button::before { content: ""; width: 42px; height: 5px; border: 1px solid transparent; border-radius: 2px; flex: none; }
.keys .led::before { border-color: #1a1a1a; background: #4a4a4a; }
.keys .flat { background: linear-gradient(#333, #2a2a2a); border-color: #1f1f1f; box-shadow: none; }
.keys button > svg { margin: -2px 0 2px; }
.keys .none { line-height: 44px; }
.keys .none > svg { align-self: flex-end; margin: -4px 2px 0 0; }
.gas { height: 30px; font: 18px/34px Roboto, sans-serif; }
.gas b { font-size: 13px; font-weight: 400; }
.sim { font: 10px "Liberation Sans", sans-serif; fill: #b3a5f5; stroke: none; }
.run { display: grid; grid-template-columns: 125px 127px 1fr; height: 45px; margin-top: 11px; border: solid #666; border-width: 1px 0; background: linear-gradient(#2e2e2e, #272727); }
.run button { display: flex; align-items: center; font-size: 14px; padding-left: 28px; gap: 14px; white-space: nowrap; }
.run button + button { border-left: 1px solid #666; padding-left: 32px; gap: 12px; }
.run button:last-child { padding-left: 20px; gap: 16px; }

/* annotations over the screen */
.notes { position: absolute; left: 0; top: 0; pointer-events: none; }
.note { position: absolute; width: 284px; height: 78px; font-size: 24px; line-height: 37px; text-align: center; font-family: "Noto Sans CJK SC", sans-serif; white-space: nowrap; }
.orange { left: 636px; top: 334px; background: #cb660b; }
.red { left: 1084px; top: 334px; background: #fc3030; }
.green { left: 1083px; top: 531px; background: #469309; }
.azure { left: 62px; top: 531px; background: #2659ed; }
.tag { position: absolute; height: 30px; padding-left: 3px; font: 500 16px/30px "Noto Sans CJK SC", sans-serif; white-space: nowrap; }
.table { left: 42px; top: 905px; width: 146px; background: #2659ed; }
.slider { left: 1757px; top: 385px; width: 160px; background: #469309; }
```
